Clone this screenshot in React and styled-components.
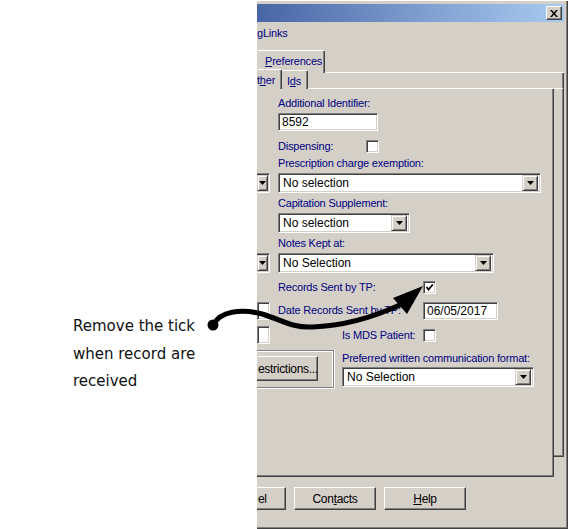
import React from 'react'
import styled, { createGlobalStyle } from 'styled-components'

const Global = createGlobalStyle`
  html, body { margin: 0; padding: 0; background: #fff; }
  body {
    width: 568px;
    height: 529px;
    overflow: hidden;
    font-family: "Liberation Sans", Arial, sans-serif;
  }
`

const Page = styled.div`
  position: relative;
  display: flex;
  width: 568px;
  height: 529px;
  background: #fff;
`

/* ---------- callout on the left ---------- */

const Callout = styled.div`
  width: 257px;
  flex: none;
  box-sizing: border-box;
  padding: 313px 0 0 73px;
`

const Note = styled.p`
  margin: 0;
  font-family: "DejaVu Sans", sans-serif;
  font-size: 15px;
  line-height: 27.5px;
  color: #111;
`

const ArrowLayer = styled.svg`
  position: absolute;
  left: 0;
  top: 0;
  pointer-events: none;
`

/* ---------- dialog window ---------- */

const Dialog = styled.div`
  width: 311px;
  height: 528px;
  margin-top: 1px;
  box-sizing: border-box;
  padding: 3px 3px 0 0;
  background: #d4d0c8;
  border-right: 1px solid #404040;
  border-bottom: 1px solid #404040;
  box-shadow: inset -1px -1px 0 #808080;
  display: flex;
  flex-direction: column;
  font-size: 11px;
  letter-spacing: -0.2px;
  overflow: hidden;
`

const TitleBar = styled.div`
  height: 18px;
  flex: none;
  display: flex;
  align-items: center;
  justify-content: flex-end;
  padding-right: 2px;
  background: linear-gradient(90deg, #4865a5 0%, #7f9fd0 55%, #a8cbf0 100%);
`

const CloseButton = styled.div`
  width: 16px;
  height: 14px;
  box-sizing: border-box;
  background: #d4d0c8;
  border-top: 1px solid #fff;
  border-left: 1px solid #fff;
  border-right: 1px solid #404040;
  border-bottom: 1px solid #404040;
  box-shadow: inset -1px -1px 0 #808080;
  display: flex;
  align-items: center;
  justify-content: center;
`

const Navy = styled.div`
  color: #000080;
  height: 13px;
  line-height: 13px;
  white-space: nowrap;
  margin-top: ${p => p.$top || 0}px;
`

const TabStrip = styled.div`
  display: flex;
  align-items: flex-end;
  height: ${p => p.$h}px;
  flex: none;
  margin-top: ${p => p.$top || 0}px;
  position: relative;
`

const Tab = styled.div`
  height: ${p => p.$h}px;
  width: ${p => p.$w}px;
  flex: none;
  box-sizing: border-box;
  padding-left: ${p => p.$pad || 0}px;
  padding-top: 3px;
  border-top: 1px solid #fff;
  border-right: 1px solid #404040;
  border-top-right-radius: 2px;
  box-shadow: inset -1px 0 0 #808080;
  color: #000080;
  line-height: 14px;
  white-space: nowrap;
  background: #d4d0c8;
`

const TabFill = styled.div`
  flex: 1;
  align-self: stretch;
  border-bottom: 1px solid #fff;
`

const OuterPanel = styled.div`
  height: 384px;
  flex: none;
  box-sizing: border-box;
  border-right: 1px solid #404040;
  border-bottom: 1px solid #404040;
  box-shadow: inset -1px -1px 0 #808080;
  display: flex;
  flex-direction: column;
`

const InnerPanel = styled.div`
  height: 388px;
  margin-right: 9px;
  flex: none;
  box-sizing: border-box;
  background: #d4d0c8;
  border-right: 1px solid #404040;
  border-bottom: 1px solid #404040;
  box-shadow: inset -1px -1px 0 #808080;
  display: flex;
  flex-direction: column;
`

const Row = styled.div`
  display: flex;
  align-items: center;
  height: ${p => p.$h}px;
  margin-top: ${p => p.$top}px;
  flex: none;
`

const Stub = styled.div`
  width: 13px;
  margin-right: ${p => p.$gap ?? 8}px;
  flex: none;
  display: flex;
  align-items: center;
`

const Label = styled.div`
  color: #000080;
  white-space: nowrap;
  line-height: 13px;
  width: ${p => (p.$w ? `${p.$w}px` : 'auto')};
  flex: none;
`

const sunken = `
  box-sizing: border-box;
  background: #fff;
  border-top: 1px solid #808080;
  border-left: 1px solid #808080;
  border-right: 1px solid #fff;
  border-bottom: 1px solid #fff;
  box-shadow: inset 1px 1px 0 #404040, inset -1px -1px 0 #d4d0c8;
`

const TextBox = styled.div`
  ${sunken}
  width: ${p => p.$w}px;
  height: 18px;
  padding: 0 0 0 3px;
  line-height: 16px;
  color: #000;
  font-size: 12px;
  letter-spacing: 0;
  flex: none;
`

const Combo = styled.div`
  ${sunken}
  width: ${p => p.$w}px;
  height: 20px;
  padding: 2px 2px 2px 4px;
  display: flex;
  align-items: center;
  justify-content: space-between;
  color: #000;
  font-size: 12px;
  letter-spacing: 0;
  flex: none;
`

const DropButton = styled.div`
  width: 16px;
  height: 16px;
  box-sizing: border-box;
  background: #d4d0c8;
  border-top: 1px solid #d4d0c8;
  border-left: 1px solid #d4d0c8;
  border-right: 1px solid #404040;
  border-bottom: 1px solid #404040;
  box-shadow: inset 1px 1px 0 #fff, inset -1px -1px 0 #808080;
  display: flex;
  align-items: center;
  justify-content: center;
  flex: none;
`

const StubCombo = styled.div`
  width: 13px;
  height: 20px;
  box-sizing: border-box;
  padding: 2px 2px 2px 0;
  border-top: 1px solid #808080;
  border-bottom: 1px solid #fff;
  border-right: 1px solid #fff;
  box-shadow: inset 0 1px 0 #404040, inset -1px -1px 0 #d4d0c8;
  background: #fff;
  display: flex;
  align-items: center;
`

const Check = styled.div`
  ${sunken}
  width: 13px;
  height: 13px;
  flex: none;
  display: flex;
  align-items: center;
  justify-content: center;
`

const GroupFrame = styled.div`
  width: 77px;
  height: 38px;
  box-sizing: border-box;
  border-top: 1px solid #808080;
  border-right: 1px solid #808080;
  border-bottom: 1px solid #808080;
  box-shadow: inset 0 1px 0 #fff, inset -1px 0 0 #fff, 0 1px 0 #fff, 1px 0 0 #fff;
  padding: 5px 0 0 0;
  margin-right: 8px;
  flex: none;
  align-self: flex-start;
`

const PushButton = styled.div`
  width: ${p => p.$w}px;
  height: ${p => p.$h || 23}px;
  box-sizing: border-box;
  background: #d4d0c8;
  border-top: 1px solid #fff;
  border-left: ${p => (p.$cut ? 'none' : '1px solid #fff')};
  border-right: 1px solid #404040;
  border-bottom: 1px solid #404040;
  box-shadow: inset -1px -1px 0 #808080;
  display: flex;
  align-items: center;
  justify-content: ${p => (p.$cut ? 'flex-start' : 'center')};
  padding-left: ${p => (p.$cut ? 1 : 0)}px;
  color: #000;
  font-size: 12px;
  letter-spacing: -0.3px;
  flex: none;
`

const RightCol = styled.div`
  display: flex;
  flex-direction: column;
`

const ButtonBar = styled.div`
  display: flex;
  gap: 8px;
  margin-top: 30px;
  flex: none;
`

const Arrow = () => (
  <svg width="7" height="4" viewBox="0 0 7 4">
    <polygon points="0,0 7,0 3.5,4" fill="#000" />
  </svg>
)

const Tick = () => (
  <svg width="9" height="9" viewBox="0 0 9 9">
    <polyline points="1.5,4 3.5,6.5 7.8,1.5" fill="none" stroke="#000" strokeWidth="1.8" />
  </svg>
)

const Select = ({ w, text }) => (
  <Combo $w={w}>
    <span>{text}</span>
    <DropButton><Arrow /></DropButton>
  </Combo>
)

const SelectStub = () => (
  <StubCombo>
    <DropButton style={{ width: 11 }}><Arrow /></DropButton>
  </StubCombo>
)

export default function App() {
  return (
    <Page>
      <Global />
      <Callout>
        <Note>Remove the tick</Note>
        <Note>when record are</Note>
        <Note>received</Note>
      </Callout>

      <Dialog>
        <TitleBar>
          <CloseButton>
            <svg width="8" height="7" viewBox="0 0 8 7">
              <path d="M0 0H2L4 2.5L6 0H8L5 3.5L8 7H6L4 4.5L2 7H0L3 3.5Z" fill="#000" />
            </svg>
          </CloseButton>
        </TitleBar>

        <Navy $top={5}>gLinks</Navy>

        <TabStrip $h={23} $top={10}>
          <Tab $h={23} $w={68} $pad={8}><u>P</u>references</Tab>
          <TabFill />
        </TabStrip>

        <OuterPanel>
          <TabStrip $h={20} $top={-4}>
            <Tab $h={20} $w={25}>t<u>h</u>er</Tab>
            <Tab $h={19} $w={26} $pad={5}>I<u>d</u>s</Tab>
            <TabFill />
          </TabStrip>

          <InnerPanel>
            <Row $h={13} $top={8}>
              <Stub />
              <Label>Additional Identifier:</Label>
            </Row>
            <Row $h={18} $top={3}>
              <Stub />
              <TextBox $w={100}>8592</TextBox>
            </Row>
            <Row $h={13} $top={9}>
              <Stub />
              <Label $w={88}>Dispensing:</Label>
              <Check />
            </Row>
            <Row $h={13} $top={4}>
              <Stub />
              <Label>Prescription charge exemption:</Label>
            </Row>
            <Row $h={20} $top={3}>
              <Stub><SelectStub /></Stub>
              <Select w={263} text="No selection" />
            </Row>
            <Row $h={13} $top={4}>
              <Stub />
              <Label>Capitation Supplement:</Label>
            </Row>
            <Row $h={20} $top={3}>
              <Stub />
              <Select w={132} text="No selection" />
            </Row>
            <Row $h={13} $top={4}>
              <Stub />
              <Label>Notes Kept at:</Label>
            </Row>
            <Row $h={20} $top={3}>
              <Stub><SelectStub /></Stub>
              <Select w={216} text="No Selection" />
            </Row>
            <Row $h={13} $top={8}>
              <Stub />
              <Label $w={145}>Records Sent by TP:</Label>
              <Check><Tick /></Check>
            </Row>
            <Row $h={19} $top={7}>
              <Stub><TextBox $w={13} /></Stub>
              <Label $w={145}>Date Records Sent by TP:</Label>
              <TextBox $w={75}>06/05/2017</TextBox>
            </Row>
            <Row $h={18} $top={6}>
              <Stub $gap={72}><TextBox $w={13} /></Stub>
              <Label $w={81}>Is MDS Patient:</Label>
              <Check />
            </Row>
            <Row $h={38} $top={6}>
              <GroupFrame>
                <PushButton $cut $w={61} $h={25}>estrictions...</PushButton>
              </GroupFrame>
              <RightCol>
                <Label>Preferred written communication format:</Label>
                <div style={{ height: 2 }} />
                <Select w={192} text="No Selection" />
              </RightCol>
            </Row>
          </InnerPanel>
        </OuterPanel>

        <ButtonBar>
          <PushButton $cut $w={29}>el</PushButton>
          <PushButton $w={82}>Con<u>t</u>acts</PushButton>
          <PushButton $w={82}><u>H</u>elp</PushButton>
        </ButtonBar>
      </Dialog>

      <ArrowLayer width="568" height="529" viewBox="0 0 568 529">
        <circle cx="213" cy="325" r="5.5" fill="#000" />
        <path
          d="M214 324 C220 312 240 308 262 314 C282 320 292 328 312 327 C342 326 372 318 402 304"
          fill="none"
          stroke="#000"
          strokeWidth="5"
          strokeLinecap="round"
        />
        <polygon points="423,286 393,298 407,314" fill="#000" />
      </ArrowLayer>
    </Page>
  )
}
